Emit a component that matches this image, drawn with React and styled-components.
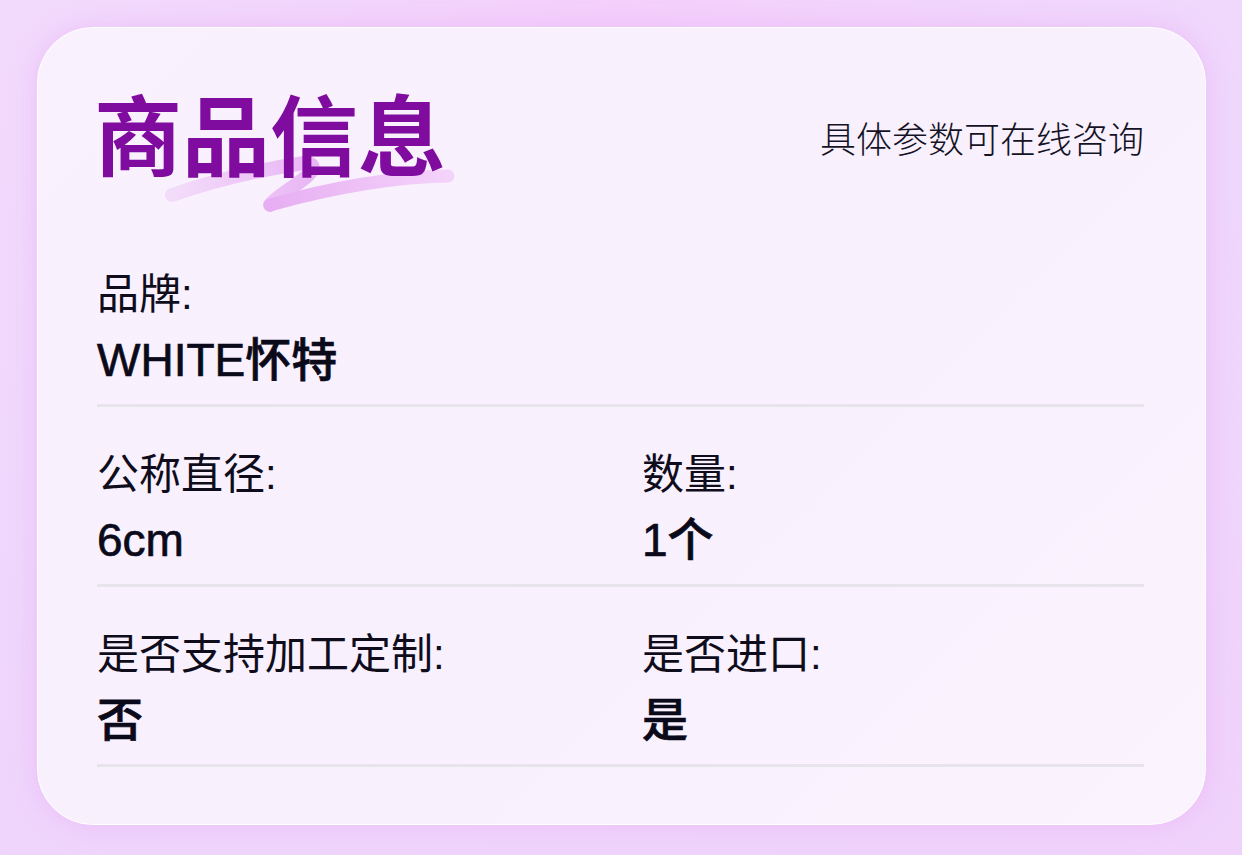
import styled, { createGlobalStyle } from "styled-components";

const GlobalStyle = createGlobalStyle`
  body {
    margin: 0;
    background: #f1d8fc;
    font-family: "Liberation Sans", "Noto Sans CJK SC", sans-serif;
  }
`;

const specs = [
  [{ label: "品牌:", value: "WHITE怀特" }],
  [
    { label: "公称直径:", value: "6cm" },
    { label: "数量:", value: "1个" },
  ],
  [
    { label: "是否支持加工定制:", value: "否" },
    { label: "是否进口:", value: "是" },
  ],
];

const App = () => {
  return (
    <Page>
      <GlobalStyle />
      <Card>
        <Header>
          <TitleWrap>
            <Brush width="300" height="70" viewBox="0 0 300 70">
              <defs>
                <linearGradient id="brushA" x1="0" y1="0" x2="1" y2="0">
                  <stop offset="0" stopColor="#f3dcfa" />
                  <stop offset="1" stopColor="#e9b6f5" />
                </linearGradient>
                <linearGradient id="brushB" x1="0" y1="0" x2="1" y2="0">
                  <stop offset="0" stopColor="#e7aef3" />
                  <stop offset="1" stopColor="#f4d3fa" />
                </linearGradient>
              </defs>
              <path
                d="M8 48 C60 30 100 22 140 16 C150 15 152 22 142 30 C130 40 112 50 106 58"
                fill="none"
                stroke="url(#brushA)"
                strokeWidth="14"
                strokeLinecap="round"
                strokeLinejoin="round"
              />
              <path
                d="M106 58 C170 40 230 30 284 29"
                fill="none"
                stroke="url(#brushB)"
                strokeWidth="13"
                strokeLinecap="round"
              />
            </Brush>
            <Title>商品信息</Title>
          </TitleWrap>
          <Subtitle>具体参数可在线咨询</Subtitle>
        </Header>
        {specs.map((row, i) => (
          <Row key={i}>
            {row.map((item) => (
              <Cell key={item.label}>
                <Label>{item.label}</Label>
                <Value>{item.value}</Value>
              </Cell>
            ))}
          </Row>
        ))}
      </Card>
    </Page>
  );
};

const Page = styled.div`
  width: 1242px;
  height: 855px;
  box-sizing: border-box;
  padding: 27px 36px 30px 37px;
  background:
    radial-gradient(ellipse at 50% 0%, #f4d0fb 0%, rgba(244, 208, 251, 0) 60%),
    linear-gradient(160deg, #f2dafc 0%, #efd6fc 50%, #f0d2fb 100%);
  overflow: hidden;
`;

const Card = styled.div`
  width: 100%;
  height: 100%;
  box-sizing: border-box;
  padding: 47px 61px 0 59px;
  border-radius: 56px;
  border: 1px solid #ffffff;
  background: linear-gradient(135deg, #f9f1fd 0%, #f8f0fd 50%, #fbf3fe 100%);
  box-shadow: 0 0 24px rgba(232, 170, 246, 0.55);
`;

const Header = styled.div`
  display: flex;
  justify-content: space-between;
  align-items: center;
  height: 112px;
  margin-bottom: 83px;
`;

const TitleWrap = styled.div`
  position: relative;
  margin-left: -3px;
`;

const Brush = styled.svg`
  position: absolute;
  left: 70px;
  top: 72px;
`;

const Title = styled.h1`
  position: relative;
  margin: 0;
  font-family: "Noto Sans CJK SC", sans-serif;
  font-size: 88px;
  font-weight: 700;
  line-height: 112px;
  color: #800c9f;
`;

const Subtitle = styled.div`
  font-family: "Noto Sans CJK SC", sans-serif;
  font-size: 36px;
  font-weight: 300;
  color: #141225;
  line-height: 40px;
  margin-top: 12px;
`;

const Row = styled.div`
  display: grid;
  grid-template-columns: 545px 1fr;
  border-bottom: 3px solid #e8e4eb;
  padding-bottom: 16px;
  margin-bottom: 43px;
`;

const Cell = styled.div`
  display: flex;
  flex-direction: column;
`;

const Label = styled.div`
  font-size: 42px;
  line-height: 50px;
  color: #0f0d1c;
`;

const Value = styled.div`
  margin-top: 12px;
  font-size: 46px;
  font-weight: 500;
  line-height: 56px;
  color: #0b0a1a;
  -webkit-text-stroke: 0.7px #0b0a1a;
`;

export default App;
